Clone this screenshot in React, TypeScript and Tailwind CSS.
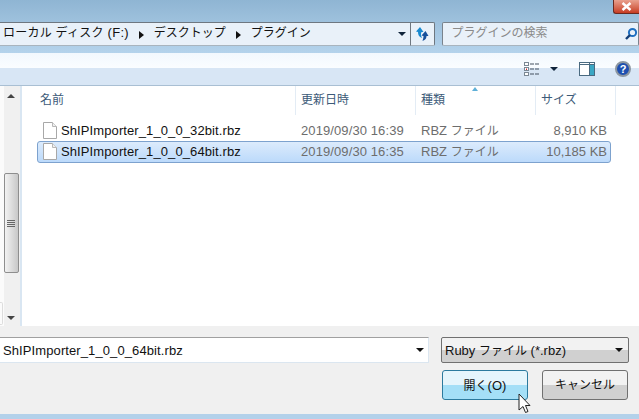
const ui = { fontFamily: '"Liberation Sans", "Noto Sans CJK JP", sans-serif' };

function Arrow({ className = "" }: { className?: string }) {
    return (
        <svg width="8" height="4" viewBox="0 0 8 4" className={className}>
            <path d="M0 0h8L4 4z" fill="currentColor" />
        </svg>
    );
}

function Crumb() {
    return (
        <svg width="5" height="8" viewBox="0 0 5 8" className="mx-[10px] mt-[2px] shrink-0">
            <path d="M0 0l5 4-5 4z" fill="#111" />
        </svg>
    );
}

function FileIcon() {
    return (
        <svg width="14" height="17" viewBox="0 0 14 17" className="shrink-0">
            <path d="M.5.5h9l4 4v12H.5z" fill="#fff" stroke="#a8a8a8" />
            <path d="M9.5.5v4h4" fill="#f0f0f0" stroke="#b8b8b8" />
        </svg>
    );
}

// Japanese runs are 12px in the dialog, latin ones 13px
function Kana({ children }: { children: string }) {
    return <span className="text-[12px]">{children}</span>;
}

function Row({ name, date, size, selected }: { name: string; date: string; size: string; selected?: boolean }) {
    const box = selected
        ? "h-[22px] border-[#7da2ce] bg-gradient-to-b from-[#dcebfc] to-[#bcdafb]"
        : "h-[21px] border-transparent";
    return (
        <div className={`flex items-center pb-[1px] rounded-[3px] border text-[13px] leading-none ${box}`}>
            <div className="w-[263px] flex items-center pl-[5px] gap-[4px] text-[#111] tracking-[0.1px]">
                <FileIcon />
                <span>{name}</span>
            </div>
            <div className="w-[120px] text-[#6d6d6d] tracking-[0.1px]">{date}</div>
            <div className="w-[84px] text-[#6d6d6d]">RBZ <Kana>ファイル</Kana></div>
            <div className="flex-1 pr-[3px] text-right text-[#6d6d6d]">{size}</div>
        </div>
    );
}

export default function App() {
    return (
        <div className="w-[639px] h-[419px] overflow-hidden flex flex-col bg-[#b3d1ea]" style={ui}>
            {/* title + address bar */}
            <div className="relative h-[53px] shrink-0 bg-gradient-to-b from-[#8fb5d3] to-[#b4d3ec]">
                <div className="absolute right-0 top-0 w-[26px] h-[14px] rounded-bl-[3px] border-l border-b border-[#6b2a20] bg-gradient-to-b from-[#e8a08e] to-[#c63a20] flex items-center justify-center">
                    <svg width="11" height="9" viewBox="0 0 11 9">
                        <path d="M1.5 1l8 7M9.5 1l-8 7" stroke="#fff" strokeWidth="2.4" />
                    </svg>
                </div>
                <div className="absolute left-0 right-0 top-[22px] h-[24px] flex">
                    <div className="w-[412px] border border-l-0 border-[#6e7780] border-b-[#a8b4be] bg-[#e9f1f9] flex items-center text-[13px] text-[#111] leading-none">
                        <span className="pl-[3px] pb-[3px] tracking-[0.25px]"><Kana>ローカル ディスク</Kana> (F:)</span>
                        <Crumb />
                        <span className="pb-[3px]"><Kana>デスクトップ</Kana></span>
                        <Crumb />
                        <span className="pb-[3px]"><Kana>プラグイン</Kana></span>
                        <div className="flex-1" />
                        <Arrow className="text-[#10243a] mr-[4px]" />
                    </div>
                    <div className="w-[24px] border border-l-0 border-[#6e7780] border-b-[#a8b4be] bg-[#e9f1f9] rounded-r-[2px] flex items-center justify-center">
                        <svg width="15" height="14" viewBox="0 0 15 14">
                            <path d="M5 0L1 4.5l2 .5c0 3 1 5 4 6-1-2-1.500-4-.5-6L8.500 5z" fill="#1a8ad0" />
                            <path d="M10.500 4L6.500 8.500l2 .5c0 2-.5 3-1 5 3-1 4-3 4-5l2 0z" fill="#16509c" />
                        </svg>
                    </div>
                    <div className="ml-[7px] w-[198px] border border-[#7a838c] border-b-[#a8b4be] rounded-[2px] bg-[#e9f1f9] flex items-center text-[12px] text-[#8a8a8a] leading-none pl-[9px]">
                        <span className="flex-1 pb-[2px]">プラグインの検索</span>
                        <svg width="14" height="14" viewBox="0 0 14 14">
                            <circle cx="8.500" cy="5.500" r="3.600" fill="none" stroke="#1f6fc0" strokeWidth="2" />
                            <path d="M6 8L2 12" stroke="#123f78" strokeWidth="2.400" />
                        </svg>
                    </div>
                </div>
            </div>

            {/* toolbar */}
            <div className="h-[33px] shrink-0 border-b border-[#a9bfd3] flex flex-col relative">
                <div className="h-[15px] bg-gradient-to-b from-[#f2f8fe] to-[#fafdff]" />
                <div className="flex-1 bg-[#d8e6f5]" />
                <div className="absolute top-[8px] left-[524px] flex items-center">
                    <svg width="15" height="14" viewBox="0 0 15 14">
                        <rect x=".5" y=".5" width="4" height="3" fill="#fff" stroke="#7a8794" />
                        <rect x=".5" y="5.500" width="4" height="3" fill="#fff" stroke="#7a8794" />
                        <rect x=".5" y="10.500" width="4" height="3" fill="#fff" stroke="#7a8794" />
                        <path d="M6 2h4M11 2h4M6 7h4M11 7h4M6 12h4M11 12h4" stroke="#44515e" />
                        <path d="M2 6.500h1v1.500H2z" fill="#d03030" />
                    </svg>
                    <Arrow className="ml-[11px] text-[#10243a]" />
                    <svg width="16" height="14" viewBox="0 0 16 14" className="ml-[21px]">
                        <rect x=".5" y=".5" width="15" height="13" fill="#fff" stroke="#4a6a80" />
                        <rect x="10" y="3" width="5" height="10" fill="#3ba7c4" />
                        <path d="M.5 2.500h15M10.500 1v12" stroke="#4a6a80" />
                    </svg>
                    <div className="ml-[20px] w-[16px] h-[16px] rounded-full bg-[#1d4fb0] border-2 border-[#8c96a0] flex items-center justify-center text-white text-[11px] font-bold leading-none">
                        ?
                    </div>
                </div>
            </div>

            {/* content */}
            <div className="flex-1 min-h-0 flex bg-white">
                <div className="w-[4px] shrink-0 flex flex-col justify-end pb-[1px] bg-[#fbfbfb]">
                    <div className="w-[3px] h-[23px] rounded-r-[2px] border border-l-0 border-[#dddddd]" />
                </div>
                <div className="w-[18px] shrink-0 border-r-2 border-[#d9e6f2] bg-[#f0f0f0] flex flex-col items-center pr-[2px] pt-[8px] pb-[6px]">
                    <Arrow className="rotate-180 text-[#444]" />
                    <div className="mt-[75px] w-[15px] h-[100px] rounded-[2px] border border-[#8e8e8e] bg-gradient-to-r from-[#f2f2f2] to-[#c8c8c8] flex flex-col justify-center items-center gap-[1px]">
                        <div className="w-[8px] h-[1px] bg-[#666]" />
                        <div className="w-[8px] h-[1px] bg-[#666]" />
                        <div className="w-[8px] h-[1px] bg-[#666]" />
                        <div className="w-[8px] h-[1px] bg-[#666]" />
                    </div>
                    <div className="flex-1" />
                    <Arrow className="text-[#444]" />
                </div>
                <div className="flex-1 min-w-0 flex flex-col">
                    <div className="relative h-[29px] shrink-0 flex text-[12px] text-[#3c5a78] leading-none">
                        <div className="w-[274px] pl-[18px] pt-[8px] border-r border-[#e3ecf5]">名前</div>
                        <div className="w-[120px] pl-[5px] pt-[8px] border-r border-[#e3ecf5]">更新日時</div>
                        <div className="w-[120px] pl-[5px] pt-[8px] border-r border-[#e3ecf5]">種類</div>
                        <div className="w-[80px] pl-[5px] pt-[8px] border-r border-[#e3ecf5]">サイズ</div>
                        <div className="absolute left-[450px] top-[1px] w-0 h-0 border-x-[3px] border-x-transparent border-b-[4px] border-b-[#5fb0d8]" />
                    </div>
                    <div className="pl-[15px] pr-[28px] pt-[5px] flex flex-col">
                        <Row name="ShIPImporter_1_0_0_32bit.rbz" date="2019/09/30 16:39" size="8,910 KB" />
                        <Row name="ShIPImporter_1_0_0_64bit.rbz" date="2019/09/30 16:35" size="10,185 KB" selected />
                    </div>
                </div>
            </div>

            {/* bottom controls */}
            <div className="h-[88px] mb-[5px] shrink-0 bg-[#f0f0f0] relative">
                <div className="flex h-[26px] mt-[11px]">
                    <div className="w-[429px] h-[26px] border border-[#dbe6f0] border-t-[#a0a0a0] border-l-0 bg-white flex items-center text-[13px] text-[#111] leading-none tracking-[0.1px]">
                        <span className="pl-[3px] flex-1">ShIPImporter_1_0_0_64bit.rbz</span>
                        <Arrow className="text-[#111] mr-[4px]" />
                    </div>
                    <div className="ml-[12px] w-[188px] h-[26px] rounded-[2px] border border-[#707070] bg-[linear-gradient(#f2f2f2_50%,#d0d0d0_50%)] flex items-center text-[13px] text-[#111] leading-none pl-[3px] pr-[5px]">
                        <span className="flex-1">Ruby <Kana>ファイル</Kana> (*.rbz)</span>
                        <Arrow className="text-[#111]" />
                    </div>
                </div>
                <div className="flex mt-[7px] pl-[442px] gap-[14px]">
                    <button className="w-[86px] h-[30px] rounded-[3px] border border-[#2c7a9e] bg-[linear-gradient(#e5f5fc_50%,#a4dff7_50%)] text-[13px] text-[#111] leading-none">
                        <Kana>開く</Kana>(O)
                    </button>
                    <button className="w-[86px] h-[30px] rounded-[3px] border border-[#707070] bg-[linear-gradient(#f2f2f2_50%,#d0d0d0_50%)] text-[12px] text-[#111] leading-none">
                        キャンセル
                    </button>
                </div>
                <svg width="13" height="21" viewBox="0 0 13 21" className="absolute left-[518px] top-[67px]">
                    <path d="M1 1v16l4-3.500 2.500 6 2.500-1-2.500-6H12z" fill="#fff" stroke="#222" />
                </svg>
            </div>
        </div>
    );
}
